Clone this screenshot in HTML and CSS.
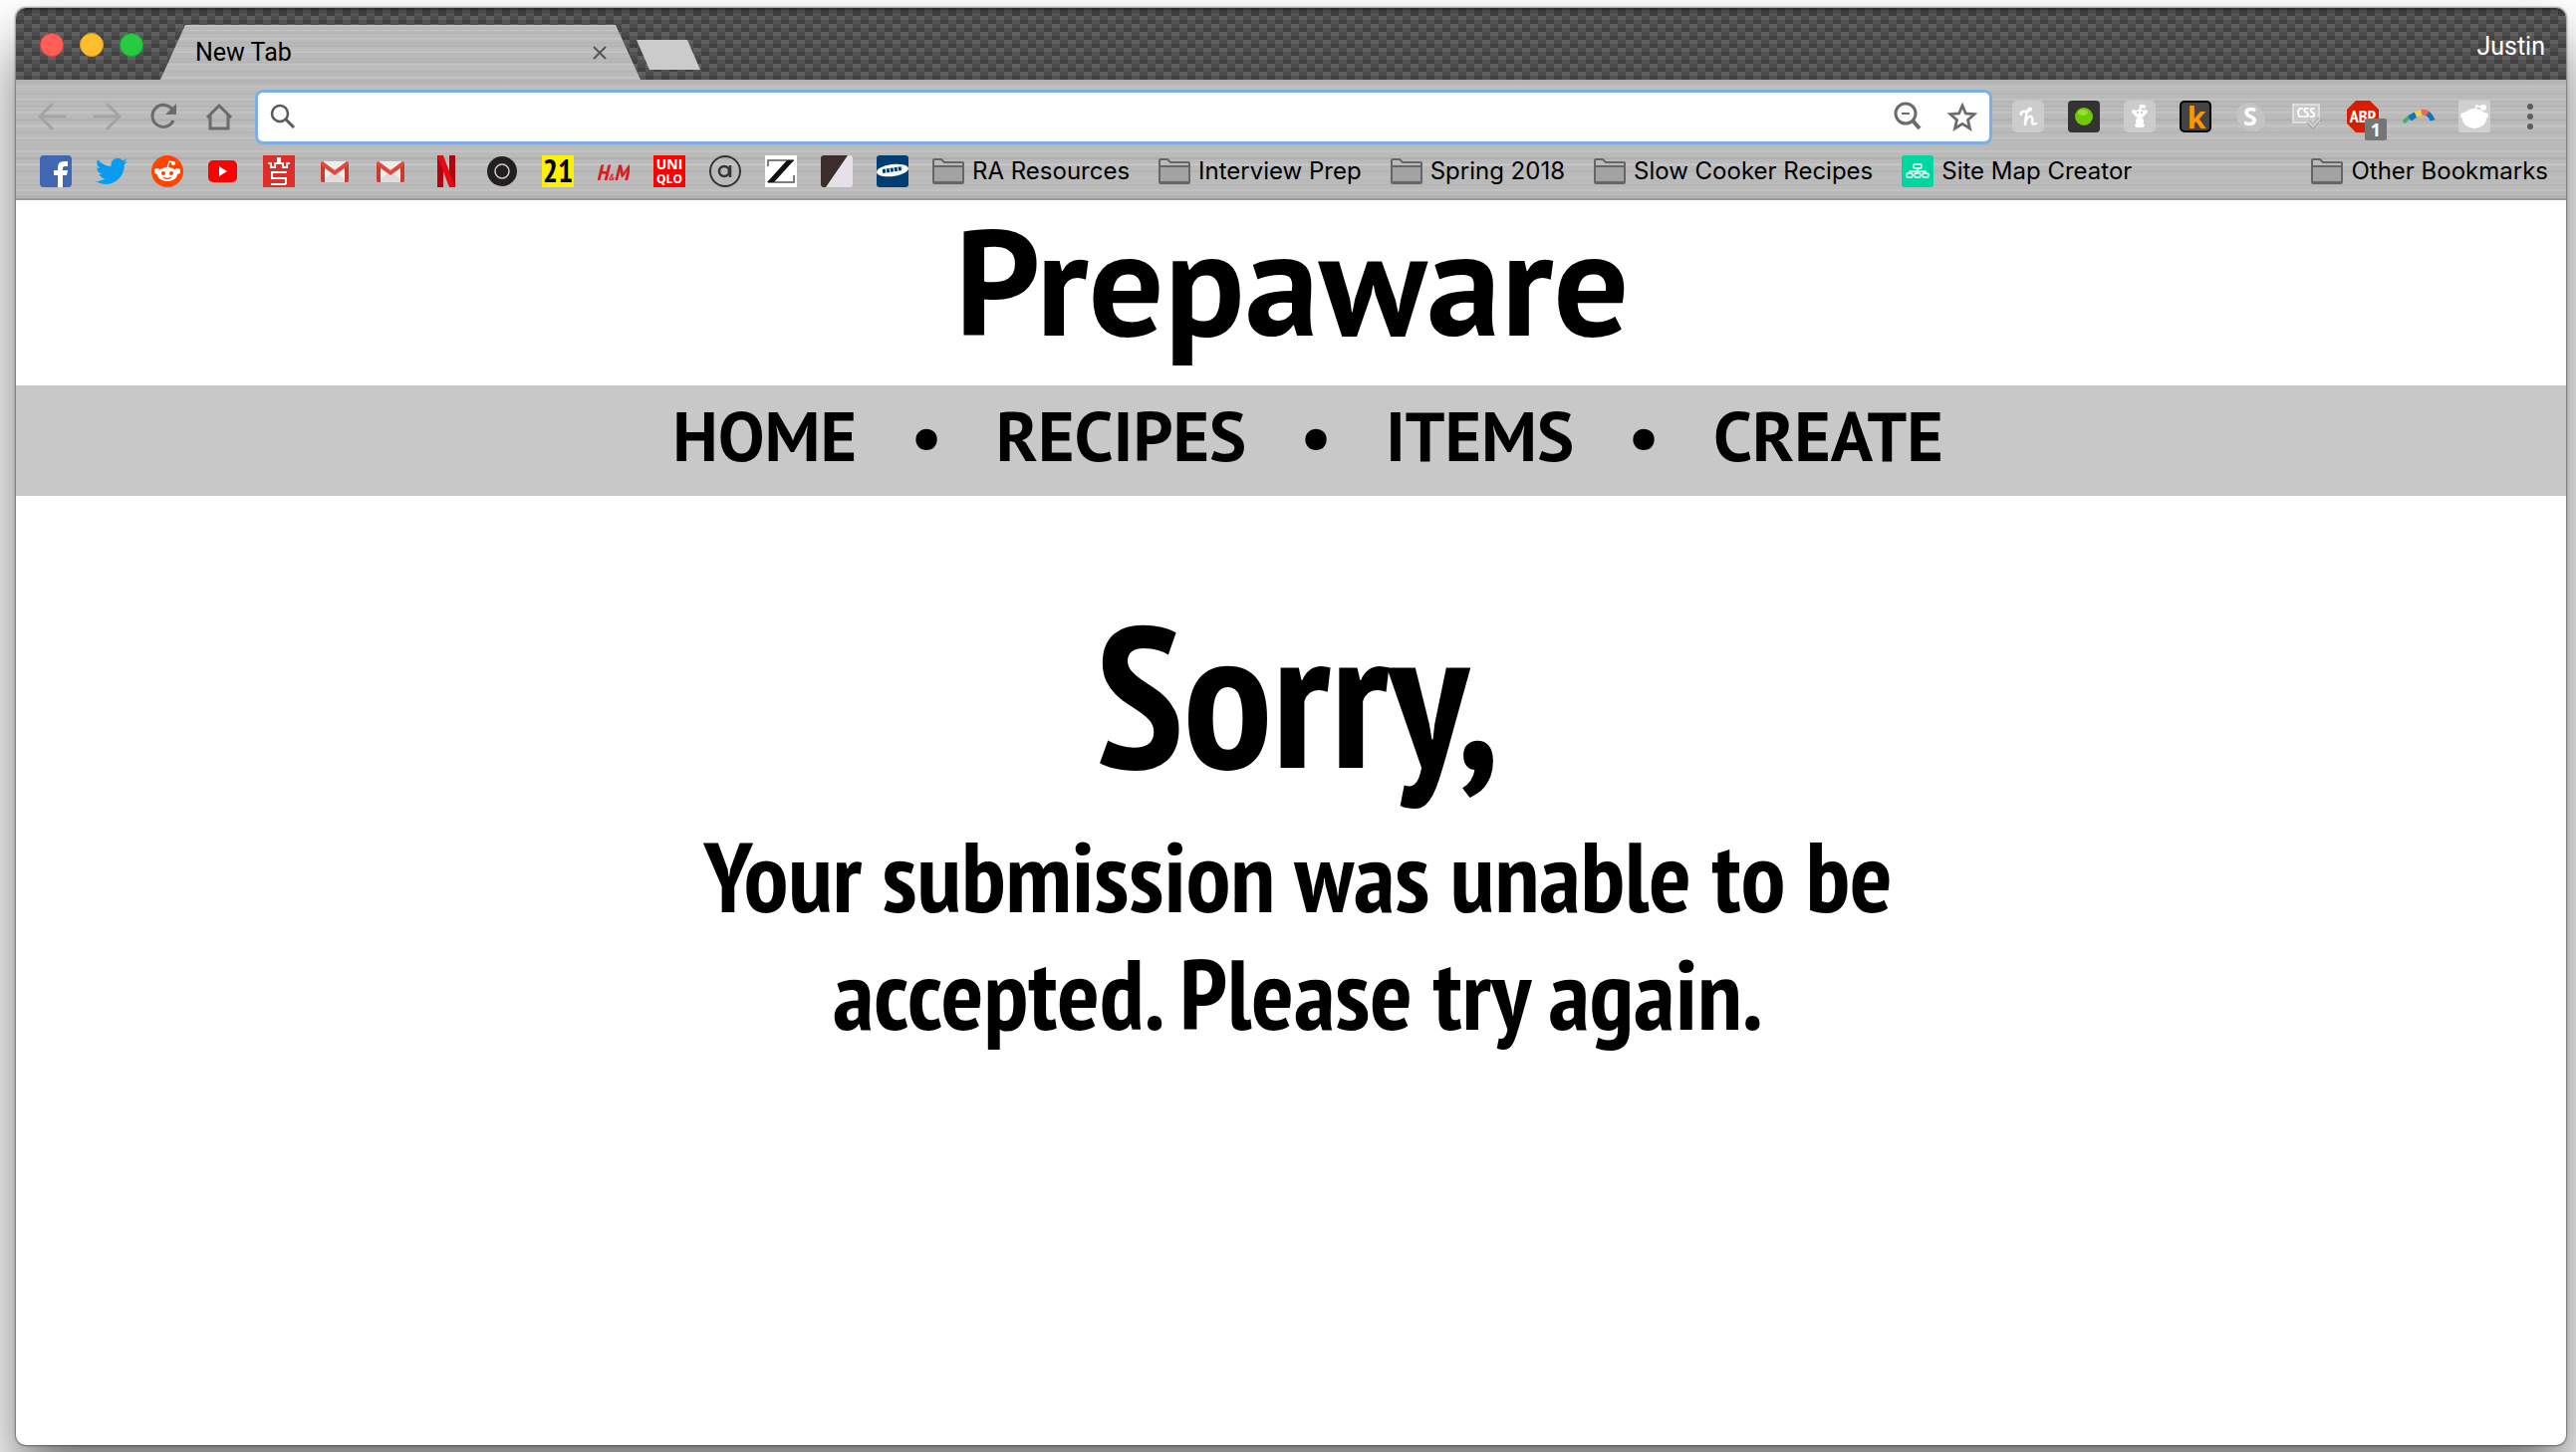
FILE: index.html
```html
<!DOCTYPE html>
<html lang="en">
<head>
<meta charset="utf-8">
<title>Prepaware</title>
<link rel="stylesheet" href="styles.css">
</head>
<body>
<svg class="defs" aria-hidden="true">
  <symbol id="folder" viewBox="0 0 32 32"><path d="M1 27V5q0-1 1-1h7l3 3h18q1 0 1 1v19q0 1-1 1H2q-1 0-1-1z" fill="#bbb" stroke="#666" stroke-width="2"/><path d="M2 12h28v14H2z" fill="#a3a3a3"/><path d="M2 11h28M2 27h28" stroke="#666" stroke-width="2"/></symbol>
  <symbol id="gmail" viewBox="0 0 32 32"><path d="M3 6h26v21H3z" fill="#eee"/><path d="M3 27 16 15l13 12z" fill="#ddd"/><path d="M2 8v17q0 2 2 2h2V10zM30 8v17q0 2-2 2h-2V10z" fill="#c93a2b"/><path d="M2 8q0-2 2-2l12 9 12-9q2 0 2 2v2L16 20 2 10z" fill="#dd4b3e"/></symbol>
  <symbol id="snoo" viewBox="0 0 32 32"><ellipse cx="16" cy="19" rx="10" ry="7"/><circle cx="6" cy="16" r="3"/><circle cx="26" cy="16" r="3"/><circle cx="22" cy="8" r="2"/><path d="M16 13l2-7 4 1" fill="none" stroke="currentColor" stroke-width="1.3"/></symbol>
</svg>
<div class="window">
  <header class="chrome">
    <div class="tabstrip">
      <div class="lights"><button class="light red" aria-label="Close window"></button><button class="light yellow" aria-label="Minimise window"></button><button class="light green" aria-label="Zoom window"></button></div>
      <div class="tab metal"><span>New Tab</span><button class="icon-btn" aria-label="Close tab"><svg width="16" height="16" viewBox="0 0 16 16"><path d="M2 2l12 12M14 2L2 14" stroke="#555" stroke-width="2"/></svg></button></div>
      <button class="new-tab" aria-label="New tab"></button>
      <button class="profile">Justin</button>
    </div>
    <div class="toolbar">
      <div class="controls">
        <button class="icon-btn faint" aria-label="Back"><svg width="32" height="32" viewBox="0 0 32 32"><path d="M29 16H4M16 4L4 16l12 12"/></svg></button>
        <button class="icon-btn faint" aria-label="Forward"><svg width="32" height="32" viewBox="0 0 32 32"><path d="M3 16h25M16 4l12 12-12 12"/></svg></button>
        <button class="icon-btn" aria-label="Reload"><svg width="32" height="32" viewBox="0 0 32 32"><path d="M26 20A11 11 0 1 1 25 9" stroke-width="3"/><path d="M29 3v11H18z" fill="#6b6b6b" stroke="none"/></svg></button>
        <button class="icon-btn" aria-label="Home"><svg width="32" height="32" viewBox="0 0 32 32"><path d="M4 17L16 5l12 12M7 15v13h18V15" stroke-width="3"/></svg></button>
      </div>
      <div class="omnibox">
        <svg width="28" height="28" viewBox="0 0 28 28"><circle cx="11" cy="11" r="8" stroke-width="2.500"/><path d="M17 17l8 8" stroke-width="3"/></svg>
        <input type="text" aria-label="Address and search">
        <button class="icon-btn" aria-label="Zoom out"><svg width="32" height="32" viewBox="0 0 32 32"><circle cx="15" cy="13" r="10"/><path d="M22 20l7 8" stroke-width="4"/><path d="M11 13h8" stroke-width="2"/></svg></button>
        <button class="icon-btn" aria-label="Bookmark this page"><svg width="32" height="32" viewBox="0 0 32 32"><path d="M16 5l3.400 8 8.600.7-6.500 5.700 2 8.600-7.500-4.600L8.500 28l2-8.600L4 13.700l8.600-.7z" stroke-width="2.800"/></svg></button>
      </div>
      <div class="extensions">
        <button class="icon-btn" aria-label="Honey"><svg width="32" height="32" viewBox="0 0 32 32"><rect width="32" height="32" rx="5" fill="#ccc"/><path d="M9 14q-1-2 2-3 7 0 8-2 0-2-2-1-3 2-4 16M13 22q3-7 6-6 2 1 1 5 0 4 4 2" fill="none" stroke="#fff" stroke-width="2.500" stroke-linecap="round"/></svg></button>
        <button class="icon-btn" aria-label="Recorder"><svg width="32" height="32" viewBox="0 0 32 32"><rect width="32" height="32" rx="4" fill="#333"/><circle cx="16" cy="16" r="9" fill="#6fc800"/><ellipse cx="15" cy="12" rx="5" ry="3" fill="#93e32c"/></svg></button>
        <button class="icon-btn" aria-label="Reddit helper"><svg width="32" height="32" viewBox="0 0 32 32"><rect width="32" height="32" rx="5" fill="#ccc"/><g fill="#fff"><ellipse cx="16" cy="13" rx="6" ry="4"/><circle cx="10" cy="11" r="2"/><circle cx="22" cy="11" r="2"/><circle cx="20" cy="6" r="2"/><ellipse cx="16" cy="21" rx="4" ry="5"/><ellipse cx="16" cy="25" rx="5" ry="2"/><path d="M16 10l1-5 3 1" fill="none" stroke="#fff"/></g><circle cx="14" cy="12" r="1" fill="#bbb"/><circle cx="18" cy="12" r="1" fill="#bbb"/></svg></button>
        <button class="icon-btn" aria-label="K"><svg width="32" height="32" viewBox="0 0 32 32"><rect x="1" y="1" width="30" height="30" rx="4" fill="#444" stroke="#000" stroke-width="2"/><text x="17" y="28" class="glyph" font-size="30" fill="#ff9800">k</text></svg></button>
        <button class="icon-btn" aria-label="Skype"><svg width="32" height="32" viewBox="0 0 32 32"><circle cx="14" cy="15" r="13" fill="#c4c4c4"/><circle cx="18" cy="19" r="12" fill="#c4c4c4"/><text x="15" y="25" class="glyph" font-size="25" fill="#fff">S</text></svg></button>
        <button class="icon-btn" aria-label="CSS checker"><svg width="32" height="32" viewBox="0 0 32 32"><rect x="2" y="4" width="26" height="18" fill="#c9c9c9" stroke="#ddd"/><text x="15" y="17" class="glyph narrow" font-size="14" fill="#fff">CSS</text><path d="M17 21l5 5 7-8" fill="none" stroke="#999" stroke-width="4"/><path d="M17 21l5 5 7-8" fill="none" stroke="#d0d0d0" stroke-width="2.500"/></svg></button>
        <button class="icon-btn badge-host" aria-label="Adblock Plus, 1 blocked"><svg width="32" height="32" viewBox="0 0 32 32"><path d="M9 0h14l9 9v14l-9 9H9l-9-9V9z" fill="#d91d00"/><text x="16" y="22" class="glyph narrow" font-size="18" fill="#fff">ABP</text></svg><span class="badge">1</span></button>
        <button class="icon-btn" aria-label="Boomerang"><svg width="32" height="32" viewBox="0 0 32 32"><g fill="none" stroke-width="6"><path d="M1 22q3-4 7-6" stroke="#4bab6d" stroke-width="4"/><path d="M7 18l6-4" stroke="#1175bb"/><path d="M13 14l6-2" stroke="#f9cd48"/><path d="M19 12q4-1 7 2" stroke="#ee6a50"/><path d="M25 13q4 3 5 7" stroke="#1175bb" stroke-width="5"/></g></svg></button>
        <button class="icon-btn" aria-label="Reddit"><svg width="32" height="32" viewBox="0 0 32 32"><rect width="32" height="32" rx="2" fill="#d0d0d0"/><g fill="#fff"><ellipse cx="16" cy="18" rx="12" ry="10"/><circle cx="5" cy="15" r="3"/><circle cx="27" cy="15" r="3"/><circle cx="25" cy="7" r="3"/><path d="M17 10l1-5 7 2" fill="none" stroke="#fff" stroke-width="1.500"/></g></svg></button>
      </div>
      <button class="icon-btn menu" aria-label="Menu"><svg width="8" height="32" viewBox="0 0 8 32"><circle cx="4" cy="6" r="3"/><circle cx="4" cy="16" r="3"/><circle cx="4" cy="26" r="3"/></svg></button>
    </div>
    <div class="bookmarks">
      <div class="favicons">
      <a href="#" aria-label="Facebook"><svg width="32" height="32" viewBox="0 0 32 32"><rect width="32" height="32" rx="4" fill="#4267b2"/><path d="M18 32V20h-4v-5h4v-3q0-6 6-6h4v5h-3q-2 0-2 2v2h5l-1 5h-4v12z" fill="#fff"/></svg></a>
      <a href="#" aria-label="Twitter"><svg width="32" height="32" viewBox="0 0 24 24"><path fill="#079cf0" d="M23.950 4.570a10 10 0 0 1-2.820.77 4.960 4.960 0 0 0 2.160-2.720c-.95.550-2 .96-3.130 1.180a4.920 4.920 0 0 0-8.380 4.480C7.690 8.090 4.070 6.130 1.640 3.160a4.920 4.920 0 0 0 1.520 6.570 4.900 4.900 0 0 1-2.230-.61v.06a4.920 4.920 0 0 0 3.950 4.830 5 5 0 0 1-2.210.08 4.940 4.940 0 0 0 4.600 3.420A9.870 9.870 0 0 1 0 19.540a14 14 0 0 0 7.550 2.210c9.050 0 14-7.500 14-13.980l-.02-.64a9.900 9.900 0 0 0 2.420-2.560z"/></svg></a>
      <a href="#" aria-label="Reddit"><svg width="32" height="32" viewBox="0 0 32 32"><circle cx="16" cy="16" r="16" fill="#ff4500"/><use href="#snoo" fill="#fff" color="#fff"/><circle cx="12" cy="18" r="2" fill="#ff4500"/><circle cx="20" cy="18" r="2" fill="#ff4500"/><path d="M12 22q4 3 8 0" fill="none" stroke="#ff4500" stroke-width="1.300"/></svg></a>
      <a href="#" aria-label="YouTube"><svg width="32" height="32" viewBox="0 0 32 32"><rect x="1" y="5" width="29" height="22" rx="5" fill="#f00"/><path d="M12 11v10l8-5z" fill="#fff"/></svg></a>
      <a href="#" aria-label="Video site"><svg width="32" height="32" viewBox="0 0 32 32"><path d="M0 0h32v32H0z" fill="#dc2f2a"/><path d="M5 8h3v4h4V8h3V3h2v5h3v4h4V8h3M8 17h16M8 23h16M9 18v5M8 29h15M23 23v6" fill="none" stroke="#fff" stroke-width="2"/></svg></a>
      <a href="#" aria-label="Gmail"><svg width="32" height="32"><use href="#gmail"/></svg></a>
      <a href="#" aria-label="Gmail, second account"><svg width="32" height="32"><use href="#gmail"/></svg></a>
      <a href="#" aria-label="Netflix"><svg width="32" height="32" viewBox="0 0 32 32"><path d="M7 0h6v32H7zM19 0h6v32h-6z" fill="#b1060f"/><path d="M7 0h6l12 32h-6z" fill="#e50914"/></svg></a>
      <a href="#" aria-label="Record"><svg width="32" height="32" viewBox="0 0 32 32"><circle cx="16" cy="16" r="15" fill="#231f20"/><circle cx="16" cy="16" r="7" fill="none" stroke="#ccc" stroke-width="1.500"/></svg></a>
      <a href="#" aria-label="Forever 21"><svg width="32" height="32" viewBox="0 0 32 32"><path d="M0 0h32v32H0z" fill="#fff200"/><text x="16" y="27" class="glyph narrow" font-size="32">21</text></svg></a>
      <a href="#" aria-label="H&amp;M"><svg width="32" height="32" viewBox="0 0 32 32"><text x="15" y="25" class="glyph narrow slant" font-size="22" fill="#d81921">H<tspan font-size="9">&amp;</tspan>M</text></svg></a>
      <a href="#" aria-label="Uniqlo"><svg width="32" height="32" viewBox="0 0 32 32"><path d="M0 0h32v32H0z" fill="#f00"/><text x="16" y="14" class="glyph" font-size="14" fill="#fff">UNI</text><text x="16" y="28" class="glyph" font-size="12" fill="#fff">QLO</text></svg></a>
      <a href="#" aria-label="A"><svg width="32" height="32" viewBox="0 0 32 32"><circle cx="16" cy="16" r="15" fill="none" stroke="#333" stroke-width="2"/><circle cx="15" cy="16" r="5" fill="none" stroke="#333" stroke-width="2.500"/><path d="M21 10v12" stroke="#333" stroke-width="2.500"/></svg></a>
      <a href="#" aria-label="Z"><svg width="32" height="32" viewBox="0 0 32 32"><path d="M0 0h32v32H0z" fill="#fff"/><path d="M3 11V5h26M3 27h26v-7" fill="none" stroke="#555" stroke-width="1.500"/><path d="M22 5h7L9 27H2z" fill="#111"/></svg></a>
      <a href="#" aria-label="Diagonal"><svg width="32" height="32" viewBox="0 0 32 32"><rect width="32" height="32" rx="3" fill="#e6e1e8"/><path d="M3 0h24L5 32H3q-3 0-3-3V3q0-3 3-3z" fill="#3a2d2b"/></svg></a>
      <a href="#" aria-label="Asana"><svg width="32" height="32" viewBox="0 0 32 32"><rect width="32" height="32" rx="3" fill="#003d72"/><ellipse cx="16" cy="15" rx="16" ry="6" fill="#fff" transform="rotate(-8 16 15)"/><path d="M6 16l20-3" stroke="#003d72" stroke-width="4" stroke-dasharray="3 1"/></svg></a>
      </div>
      <div class="folders">
      <button class="folder"><svg width="32" height="32"><use href="#folder"/></svg>RA Resources</button>
      <button class="folder"><svg width="32" height="32"><use href="#folder"/></svg>Interview Prep</button>
      <button class="folder"><svg width="32" height="32"><use href="#folder"/></svg>Spring 2018</button>
      <button class="folder"><svg width="32" height="32"><use href="#folder"/></svg>Slow Cooker Recipes</button>
      <a class="folder" href="#"><svg width="32" height="32" viewBox="0 0 32 32"><rect width="32" height="32" rx="3" fill="#00d6a0"/><g fill="none" stroke="#fff" stroke-width="1.300"><rect x="12" y="9" width="8" height="4" rx="1"/><rect x="5" y="18" width="6" height="4" rx="1"/><rect x="13" y="18" width="6" height="4" rx="1"/><rect x="21" y="18" width="6" height="4" rx="1"/><path d="M16 13v5M8 18v-2h16v2"/></g></svg>Site Map Creator</a>
      </div>
      <button class="folder other"><svg width="32" height="32"><use href="#folder"/></svg>Other Bookmarks</button>
    </div>
  </header>
  <main class="page">
    <h1 class="brand">Prepaware</h1>
    <nav class="site-nav">
      <a href="#">HOME</a><span>•</span><a href="#">RECIPES</a><span>•</span><a href="#">ITEMS</a><span>•</span><a href="#">CREATE</a>
    </nav>
    <section class="message">
      <h2>Sorry,</h2>
      <p>Your submission was unable to be<br>accepted. Please try again.</p>
    </section>
  </main>
</div>
</body>
</html>
```
FILE: styles.css
```css
* { box-sizing: border-box; }
body {
  margin: 0;
  padding: 8px 10px 7px 16px;
  background: #fff;
  font-family: Inter, "Liberation Sans", sans-serif;
  overflow: hidden;
}
button { border: 0; padding: 0; background: none; font: inherit; color: inherit; }
a { color: inherit; text-decoration: none; }
svg { display: block; flex: none; }
.defs { position: absolute; width: 0; height: 0; }

.window {
  display: flex;
  flex-direction: column;
  min-height: calc(100vh - 15px);
  border-radius: 10px;
  background: #fff;
  box-shadow: 0 0 2px 1px rgba(0, 0, 0, .4), 0 36px 60px rgba(0, 0, 0, .55);
}
.chrome, .metal {
  background:
    repeating-linear-gradient(rgba(255, 255, 255, .12) 0 2px, transparent 2px 7px, rgba(0, 0, 0, .03) 7px 9px, transparent 9px 13px),
    repeating-linear-gradient(transparent 0 5px, rgba(255, 255, 255, .1) 5px 6px, transparent 6px 17px, rgba(0, 0, 0, .03) 17px 19px),
    #bababa;
}
.chrome {
  border-radius: 10px 10px 0 0;
  border-bottom: 2px solid #9c9c9c;
}
.tabstrip {
  display: flex;
  align-items: flex-end;
  height: 72px;
  padding-right: 21px;
  border-radius: 10px 10px 0 0;
  background:
    linear-gradient(rgba(0, 0, 0, .5), transparent 6px),
    repeating-linear-gradient(transparent 0 4px, rgba(0, 0, 0, .14) 4px 8px),
    conic-gradient(#4b4b4b 25%, #616161 0 50%, #4b4b4b 0 75%, #616161 0) 0 0 / 16px 16px;
}
.lights {
  display: flex;
  gap: 16px;
  width: 145px;
  padding: 0 0 23px 24px;
}
.light { width: 24px; height: 24px; border-radius: 50%; }
.red { background: #ff5f57; border: 1px solid #e2463f; }
.yellow { background: #ffbd2e; border: 1px solid #e1a116; }
.green { background: #28ca42; border: 1px solid #12ac28; }
.tab {
  display: flex;
  align-items: center;
  justify-content: space-between;
  width: 482px;
  height: 55px;
  padding: 0 33px 0 35px;
  clip-path: polygon(25px 0, calc(100% - 25px) 0, 100% 100%, 0 100%);
  font-family: Roboto, sans-serif;
  font-size: 25px;
}
.new-tab {
  width: 64px;
  height: 30px;
  margin: 0 0 10px -4px;
  background: #cbcbcb;
  clip-path: polygon(0 0, 51px 0, 100% 100%, 13px 100%);
}
.profile {
  margin-left: auto;
  padding-bottom: 20px;
  color: #fff;
  font-family: Roboto, sans-serif;
  font-size: 25px;
  line-height: 26px;
}
.toolbar {
  display: flex;
  align-items: center;
  height: 74px;
  padding: 0 32px 0 20px;
}
.controls, .extensions, .favicons { display: flex; gap: 24px; }
.icon-btn svg { fill: none; stroke: #6b6b6b; stroke-width: 2; }
.extensions .icon-btn svg { stroke: none; }
.faint svg { stroke: #a3a3a3; stroke-width: 3; stroke-linecap: round; }
.omnibox {
  display: flex;
  align-items: center;
  flex: 1;
  gap: 24px;
  height: 55px;
  margin: 0 20px;
  padding: 0 11px;
  border: 3px solid #7cafe6;
  border-radius: 8px;
  background: #fff;
}
.omnibox > svg { fill: none; stroke: #5a5a5a; }
.omnibox > .icon-btn svg { stroke-width: 3; }
.omnibox input { flex: 1; min-width: 0; border: 0; outline: 0; background: none; font-size: 24px; }
.menu { margin-left: 36px; }
.menu svg { fill: #5d5d5d; stroke: none; }
.badge-host { position: relative; }
.badge {
  position: absolute;
  left: 18px;
  top: 18px;
  width: 22px;
  height: 22px;
  border-radius: 2px;
  background: #757575;
  color: #fff;
  font: bold 18px/22px "Open Sans", sans-serif;
}
.glyph { font-family: "Open Sans", sans-serif; font-weight: 700; text-anchor: middle; }
.narrow { font-family: "PT Sans Narrow", "Liberation Sans Narrow", sans-serif; }
.slant { font-style: italic; }

.bookmarks {
  display: flex;
  align-items: center;
  gap: 24px;
  height: 45px;
  padding: 0 18px 9px 24px;
}
.folders { display: flex; gap: 29px; }
.folder {
  display: flex;
  align-items: center;
  gap: 8px;
  font-size: 24px;
  line-height: 32px;
  white-space: nowrap;
}
.other { margin-left: auto; }

.page { color: #000; font-family: "PT Sans", "Open Sans", sans-serif; font-weight: 700; text-align: center; }
.brand { margin: 0; padding: 0 0 26px 2px; font-size: 150px; line-height: 160px; }
.site-nav {
  display: flex;
  align-items: center;
  justify-content: center;
  gap: 54px;
  padding: 0 0 11px 34px;
  background: #c8c8c8;
  font-size: 70px;
  line-height: 100px;
}
.message {
  padding: 76px 0 60px 14px;
  font-family: "PT Sans Narrow", "Liberation Sans Narrow", sans-serif;
}
.message h2 { margin: 0; font-size: 200px; line-height: 246px; }
.message p { margin: 0; font-size: 100px; line-height: 118px; }
```
